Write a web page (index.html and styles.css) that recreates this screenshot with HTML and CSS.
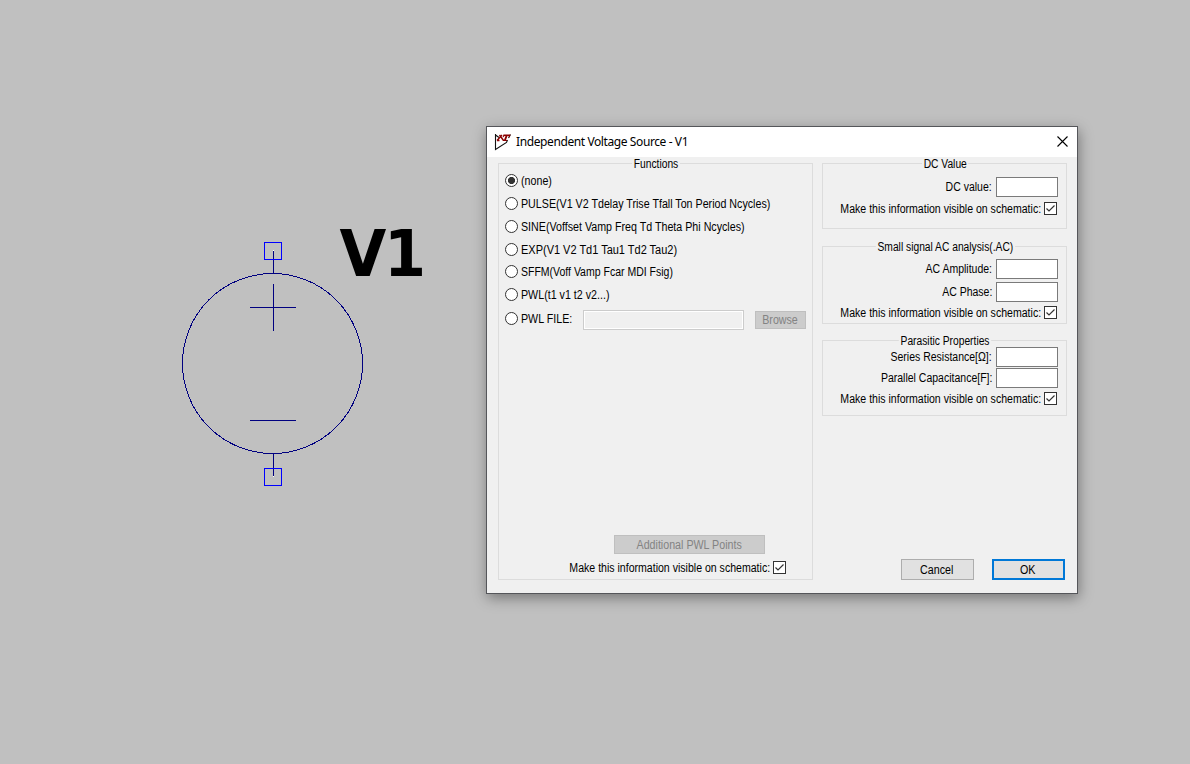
FILE: index.html
```html
<!DOCTYPE html>
<html lang="en">
<head>
<meta charset="utf-8">
<title>Independent Voltage Source - V1</title>
<link rel="stylesheet" href="styles.css">
</head>
<body>
<svg class="schematic" width="480" height="764" viewBox="0 0 480 764" shape-rendering="crispEdges">
  <g fill="none" stroke="#000080">
    <circle cx="272.5" cy="363.5" r="90"/>
    <path d="M273.5 251V274M273.5 453V476M250 307.5H296M273.5 284V331M250 420.5H296"/>
  </g>
  <g fill="none" stroke="#0000ff">
    <rect x="264.5" y="242.5" width="17" height="17"/>
    <rect x="264.5" y="468.5" width="17" height="17"/>
  </g>
  <path fill="#fff" d="M273 250h1v1h-1zM273 476h1v1h-1z"/>
  <text class="ref-name" transform="translate(339.5 276) scale(.945 1)">V1</text>
</svg>

<div class="dialog">
  <header class="titlebar">
    <svg class="logo" width="18" height="18" viewBox="0 0 18 18">
      <path d="M1.500 1V16.500L12.500 9.500L13.500 7M1.500 2L5 4.500M14.500 5L16.500 1.500" fill="none" stroke="#111" stroke-width="1.1"/>
      <path d="M3 7.500L8 2M3 7.500H5.500M5.500 2L9.500 7.500" fill="none" stroke="#8b0000" stroke-width="1.400"/>
      <path d="M9.500 1.500H16.500L15.800 4.300H14.800V3H13.500L12 7H13V8H9V7H10L11.500 3H10.500L9.300 4.300H8.500Z" fill="#8b0000"/>
    </svg>
    <span class="title">Independent Voltage Source - V1</span>
    <svg class="close" width="11" height="11" viewBox="0 0 11 11"><path d="M.5 .5L10.500 10.500M10.500 .5L.5 10.500" stroke="#000" stroke-width="1.1"/></svg>
  </header>
  <main class="content">
    <section class="group functions">
      <h2 class="legend"><span>Functions</span></h2>
      <label class="option"><i class="radio on"></i><span class="t">(none)</span></label>
      <label class="option"><i class="radio"></i><span class="t">PULSE(V1 V2 Tdelay Trise Tfall Ton Period Ncycles)</span></label>
      <label class="option"><i class="radio"></i><span class="t">SINE(Voffset Vamp Freq Td Theta Phi Ncycles)</span></label>
      <label class="option short"><i class="radio"></i><span class="t wide">EXP(V1 V2 Td1 Tau1 Td2 Tau2)</span></label>
      <label class="option"><i class="radio"></i><span class="t narrow">SFFM(Voff Vamp Fcar MDI Fsig)</span></label>
      <label class="option"><i class="radio"></i><span class="t">PWL(t1 v1 t2 v2...)</span></label>
      <div class="file-row"><i class="radio"></i><span class="t">PWL FILE:</span><div class="field disabled"></div><div class="btn disabled browse"><span class="t">Browse</span></div></div>
      <div class="btn disabled points"><span class="t">Additional PWL Points</span></div>
      <div class="check-row"><span class="t">Make this information visible on schematic:</span><svg class="check" viewBox="0 0 11 11"><path d="M1.500 5.500L4 8L9.500 2.500"/></svg></div>
    </section>
    <div class="side">
      <section class="group dc">
        <h2 class="legend"><span>DC Value</span></h2>
        <div class="row"><span class="t">DC value:</span><div class="field"></div></div>
        <div class="check-row"><span class="t">Make this information visible on schematic:</span><svg class="check" viewBox="0 0 11 11"><path d="M1.500 5.500L4 8L9.500 2.500"/></svg></div>
      </section>
      <section class="group ac">
        <h2 class="legend"><span>Small signal AC analysis(.AC)</span></h2>
        <div class="row"><span class="t">AC Amplitude:</span><div class="field"></div></div>
        <div class="row"><span class="t">AC Phase:</span><div class="field"></div></div>
        <div class="check-row"><span class="t">Make this information visible on schematic:</span><svg class="check" viewBox="0 0 11 11"><path d="M1.500 5.500L4 8L9.500 2.500"/></svg></div>
      </section>
      <section class="group parasitic">
        <h2 class="legend"><span>Parasitic Properties</span></h2>
        <div class="row"><span class="t">Series Resistance[Ω]:</span><div class="field"></div></div>
        <div class="row"><span class="t">Parallel Capacitance[F]:</span><div class="field"></div></div>
        <div class="check-row"><span class="t">Make this information visible on schematic:</span><svg class="check" viewBox="0 0 11 11"><path d="M1.500 5.500L4 8L9.500 2.500"/></svg></div>
      </section>
      <div class="actions"><div class="btn"><span class="t">Cancel</span></div><div class="btn primary"><span class="t">OK</span></div></div>
    </div>
  </main>
</div>
</body>
</html>
```

FILE: styles.css
```css
* { box-sizing: border-box; }
body { margin: 0; width: 1190px; height: 764px; overflow: hidden; background: #c0c0c0; position: relative; font: 12px/14px "Liberation Sans", sans-serif; color: #000; }
.schematic { display: block; }
.ref-name { font: bold 64px "DejaVu Sans", sans-serif; letter-spacing: -2.3px; fill: #000; }
.dialog { position: absolute; left: 486px; top: 126px; width: 592px; height: 468px; background: #f0f0f0; border: 1px solid #55565a; box-shadow: 1px 4px 13px rgba(0,0,0,.38); }
.titlebar { height: 30px; background: #fff; display: flex; align-items: center; padding: 0 9px 0 7px; font: 12px/16px "Noto Sans", sans-serif; letter-spacing: -0.4px; }
.title { margin-left: 4px; white-space: nowrap; }
.logo { margin-top: -1px; }
.close { margin: -2px 0 0 auto; }
.content { display: flex; gap: 9px; padding: 6px 10px 0 11px; }
.group { border: 1px solid #dcdcdc; }
.legend { margin: -7px 0 0; height: 14px; font: inherit; text-align: center; }
.legend span { display: inline-block; background: #f0f0f0; padding: 0 2px; margin-left: 2px; white-space: nowrap; transform: scaleX(.855); }
.t { white-space: nowrap; transform: scaleX(.89); }
.t.wide { transform: scaleX(.915); }
.t.narrow { transform: scaleX(.875); }
.functions { width: 315px; height: 417px; }
.functions .legend { margin-bottom: -2px; }
.option { display: flex; align-items: flex-start; height: 23px; padding: 5px 0 0 6px; }
.option.short { height: 22px; }
.option .t, .file-row > .t { transform-origin: left; }
.row .t, .check-row .t { transform-origin: right; }
.row .t { transform: scaleX(.875); }
.check-row .t { transform: scaleX(.88); }
.radio { flex: none; width: 13px; height: 13px; border: 1px solid #333; border-radius: 50%; background: #fff; margin-right: 3px; }
.radio.on { background: radial-gradient(circle, #333 3.2px, #fff 3.9px); }
.file-row { display: flex; align-items: flex-start; padding: 4px 6px 0; height: 27px; }
.file-row .radio { margin-top: 2px; }
.file-row > .t { margin-top: 2px; width: 62px; }
.field { flex: none; width: 62px; height: 20px; border: 1px solid #7a7a7a; background: #fff; }
.field.disabled { width: 161px; border-color: #ccc; background: #f0f0f0; box-shadow: inset 0 0 0 1px #fff; }
.btn { display: flex; align-items: center; justify-content: center; width: 73px; height: 21px; padding-right: 1px; border: 1px solid #adadad; background: #e1e1e1; }
.btn.disabled { color: #838383; background: #ccc; border-color: #bfbfbf; padding-right: 0; }
.btn.primary { border: 2px solid #0078d7; }
.browse { width: 51px; height: 18px; margin: 1px 0 0 11px; }
.points { width: 151px; height: 19px; margin: 202px 0 0 115px; }
.check-row { display: flex; justify-content: flex-end; align-items: center; height: 13px; }
.functions .check-row { margin: 7px 26px 0 0; }
.check { flex: none; width: 13px; height: 13px; margin-left: 3px; border: 1px solid #333; background: #fff; fill: none; stroke: #333; stroke-width: 1.2; }
.side { width: 245px; }
.row { display: flex; align-items: center; justify-content: flex-end; gap: 4px; height: 20px; margin-right: 8px; }
.side .check-row { margin-right: 9px; }
.dc { height: 66px; }
.dc .row { margin-top: 6px; }
.dc .check-row { margin-top: 5px; }
.ac { height: 78px; margin-top: 17px; }
.ac .row { margin-top: 3px; }
.ac .legend + .row { margin-top: 5px; }
.ac .check-row { margin-top: 4px; }
.parasitic { height: 76px; margin-top: 16px; }
.parasitic .row { margin-top: 1px; }
.parasitic .legend + .row { margin-top: -1px; }
.parasitic .check-row { margin-top: 4px; }
.actions { display: flex; justify-content: flex-end; gap: 18px; margin: 143px 2px 0 0; }
```
